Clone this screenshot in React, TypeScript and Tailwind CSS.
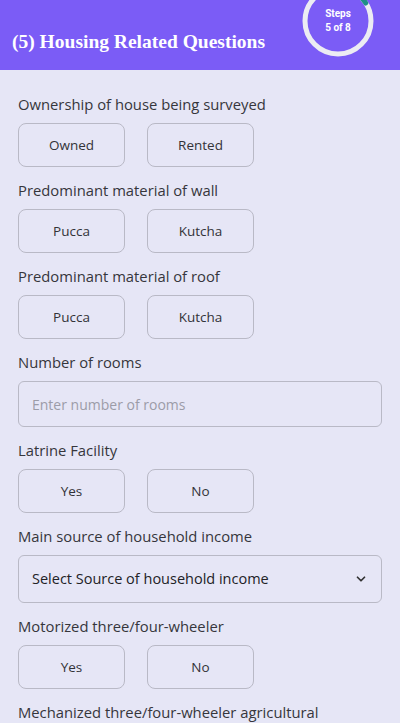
import React, { useState } from "react";
import { ChevronDown } from "lucide-react";

const body = { fontFamily: '"Open Sans", "Noto Sans", sans-serif' };

function Choice({ options }: { options: string[] }) {
  const [picked, setPicked] = useState<string | null>(null);
  return (
    <div className="flex gap-[22px]">
      {options.map((o) => (
        <button
          key={o}
          type="button"
          onClick={() => setPicked(o)}
          className={`h-[44px] w-[107px] rounded-[8px] border text-[13.5px] text-[#333338] ${
            picked === o ? "border-[#7b5cf6] bg-[#dcd6fb]" : "border-[#b9b9c6] bg-transparent"
          }`}
        >
          {o}
        </button>
      ))}
    </div>
  );
}

function Field({ label, children }: { label: string; children?: React.ReactNode }) {
  return (
    <div>
      <p className="mb-[9px] text-[14.8px] leading-[20px] text-[#36363c]">{label}</p>
      {children}
    </div>
  );
}

export default function App() {
  const [rooms, setRooms] = useState("");

  return (
    <div className="h-[723px] w-[400px] overflow-hidden bg-[#e6e6f6]" style={body}>
      <header className="flex h-[70px] justify-between overflow-hidden bg-[#7b5cf6]">
        <h1
          className="self-end pb-[14px] pl-3 text-[19.5px] font-bold text-white"
          style={{ fontFamily: '"Liberation Serif", serif' }}
        >
          (5) Housing Related Questions
        </h1>
        <div className="relative mr-[26px] -mt-[15px] h-[72px] w-[72px] shrink-0">
          <svg width="72" height="72" viewBox="0 0 72 72" className="absolute inset-0">
            <circle cx="36" cy="36" r="33" fill="none" stroke="#ececf3" strokeWidth="5" />
            <path
              d="M36 3 A33 33 0 0 1 63.7 18"
              fill="none"
              stroke="#1e8f86"
              strokeWidth="5"
              strokeLinecap="round"
            />
          </svg>
          <div
            className="absolute inset-0 flex flex-col items-center justify-center text-[10px] font-bold leading-[14px] text-white"
            style={{ fontFamily: "Roboto, sans-serif" }}
          >
            <span>Steps</span>
            <span>5 of 8</span>
          </div>
        </div>
      </header>

      <main className="flex flex-col gap-[13px] px-[18px] pt-[24px]">
        <Field label="Ownership of house being surveyed">
          <Choice options={["Owned", "Rented"]} />
        </Field>
        <Field label="Predominant material of wall">
          <Choice options={["Pucca", "Kutcha"]} />
        </Field>
        <Field label="Predominant material of roof">
          <Choice options={["Pucca", "Kutcha"]} />
        </Field>
        <Field label="Number of rooms">
          <input
            type="number"
            value={rooms}
            onChange={(e) => setRooms(e.target.value)}
            placeholder="Enter number of rooms"
            className="h-[46px] w-full rounded-[6px] border border-[#b9b9c6] bg-transparent px-[13px] text-[14px] text-[#333] outline-none placeholder:text-[#9c9ca8]"
          />
        </Field>
        <Field label="Latrine Facility">
          <Choice options={["Yes", "No"]} />
        </Field>
        <Field label="Main source of household income">
          <div className="flex h-[48px] w-full items-center justify-between rounded-[6px] border border-[#b9b9c6] px-[13px]">
            <span className="text-[14.5px] text-[#222226]">Select Source of household income</span>
            <ChevronDown size={14} strokeWidth={3} className="text-[#333]" />
          </div>
        </Field>
        <Field label="Motorized three/four-wheeler">
          <Choice options={["Yes", "No"]} />
        </Field>
        <Field label="Mechanized three/four-wheeler agricultural" />
      </main>
    </div>
  );
}
